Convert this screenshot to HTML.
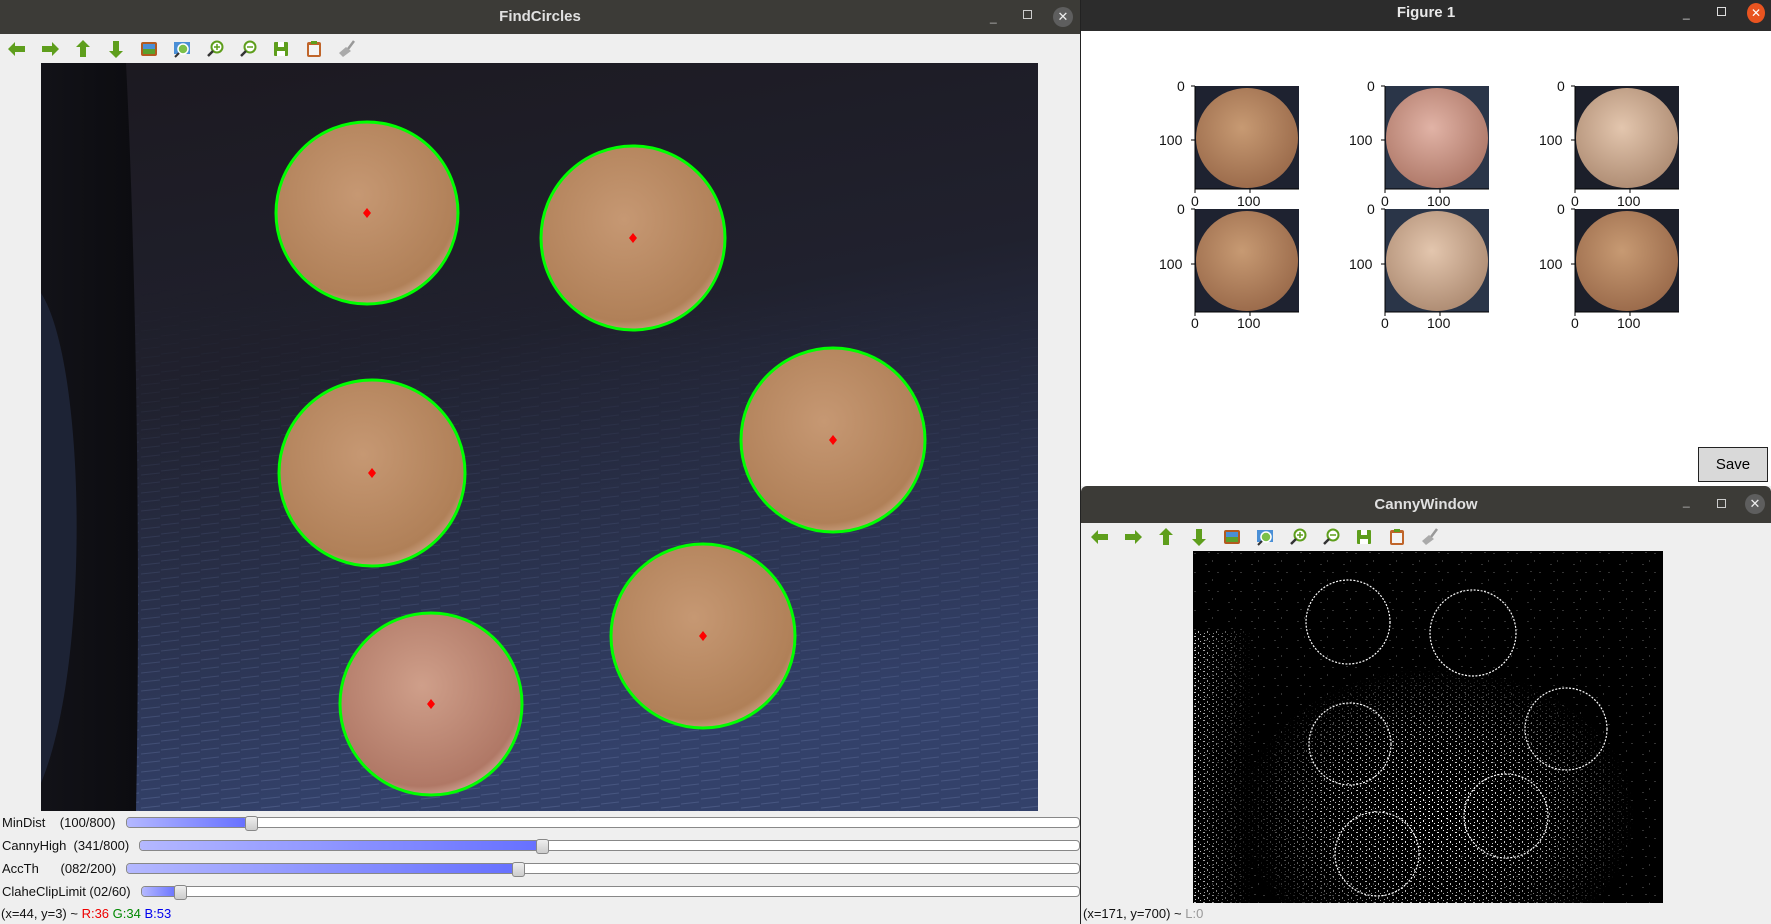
<!DOCTYPE html>
<html><head><meta charset="utf-8"><style>
*{margin:0;padding:0;box-sizing:border-box}
body{width:1771px;height:924px;overflow:hidden;background:#efefef;font-family:"Liberation Sans","DejaVu Sans",sans-serif;position:relative}
.abs{position:absolute}
.tb{background:#3c3b37;color:#e0e0e0;font-weight:bold;font-size:15px;text-align:center}
.lbl{position:absolute;font-size:13px;color:#111;white-space:pre}
.track{position:absolute;height:11px;border:1px solid #888;border-radius:4px;background:#fff;overflow:visible}
.fill{position:absolute;left:0;top:0;bottom:0;border-radius:3px;background:linear-gradient(90deg,#b4b8ff,#6670ff)}
.hdl{position:absolute;top:-2px;width:13px;height:15px;border:1px solid #888;border-radius:3px;background:linear-gradient(#eee,#ccc)}
</style></head><body>
<div class="abs tb" style="left:0;top:0;width:1080px;height:34px;line-height:34px">FindCircles</div>
<div class="abs" style="left:990px;top:10px;color:#bbb;font-size:12px">_</div>
<div class="abs" style="left:1023px;top:10px;width:9px;height:9px;border:1px solid #ccc"></div>
<div class="abs" style="left:1053px;top:7px;width:20px;height:20px;border-radius:50%;background:#5e5e5e;color:#eee;font-size:13px;text-align:center;line-height:20px">✕</div>
<div class="abs" style="left:1080px;top:0;width:1px;height:924px;background:#222"></div>

<svg class="abs" style="left:0;top:34px" width="380" height="30">
<g id="icons">
<g transform="translate(17,15)"><path d="M-9 0 L-2 -7 L-2 -3 L8 -3 L8 3 L-2 3 L-2 7Z" fill="#5e9e1c"/></g>
<g transform="translate(50,15)"><path d="M9 0 L2 -7 L2 -3 L-8 -3 L-8 3 L2 3 L2 7Z" fill="#5e9e1c"/></g>
<g transform="translate(83,15)"><path d="M0 -9 L7 -2 L3 -2 L3 8 L-3 8 L-3 -2 L-7 -2Z" fill="#5e9e1c"/></g>
<g transform="translate(116,15)"><path d="M0 9 L7 2 L3 2 L3 -8 L-3 -8 L-3 2 L-7 2Z" fill="#5e9e1c"/></g>
<g transform="translate(149,15)"><rect x="-8" y="-7" width="16" height="14" rx="2" fill="#b35a1f"/><rect x="-6" y="-5" width="12" height="5" fill="#4a8fd6"/><rect x="-6" y="0" width="12" height="5" fill="#5aa02c"/></g>
<g transform="translate(182,15)"><rect x="-8" y="-7" width="16" height="12" fill="#4a8fd6"/><circle cx="1" cy="0" r="5" fill="#7bc04a" stroke="#fff" stroke-width="1.5"/><path d="M-3 4 L-7 8" stroke="#333" stroke-width="2"/></g>
<g transform="translate(215,15)"><circle cx="2" cy="-2" r="5.5" fill="#fff" stroke="#5e9e1c" stroke-width="2"/><path d="M-2 2 L-7 7" stroke="#333" stroke-width="2.5"/><path d="M2 -5 V1 M-1 -2 H5" stroke="#5e9e1c" stroke-width="1.5"/></g>
<g transform="translate(248,15)"><circle cx="2" cy="-2" r="5.5" fill="#fff" stroke="#5e9e1c" stroke-width="2"/><path d="M-2 2 L-7 7" stroke="#333" stroke-width="2.5"/><path d="M-1 -2 H5" stroke="#5e9e1c" stroke-width="1.5"/></g>
<g transform="translate(281,15)"><rect x="-7" y="-7" width="14" height="14" rx="1" fill="#5e9e1c"/><rect x="-3" y="-7" width="6" height="5" fill="#fff"/><rect x="-4" y="2" width="8" height="5" fill="#fff"/></g>
<g transform="translate(314,15)"><rect x="-7" y="-7" width="14" height="15" rx="2" fill="#c0652a"/><rect x="-5" y="-4" width="10" height="10" fill="#f4f4f4"/><rect x="-3" y="-8" width="6" height="3" fill="#5e9e1c"/></g>
<g transform="translate(347,15)"><path d="M7 -8 L1 0" stroke="#999" stroke-width="2.5"/><path d="M-1 -2 L4 2 L-4 8 L-8 4Z" fill="#aaa"/></g>
</g>
</svg>

<svg class="abs" style="left:41px;top:63px" width="997" height="748">
<defs>
<linearGradient id="bg" x1="0" y1="0" x2="0.25" y2="1"><stop offset="0" stop-color="#1c1920"/><stop offset="0.45" stop-color="#20212e"/><stop offset="1" stop-color="#33416a"/></linearGradient>
<radialGradient id="cu" cx="0.45" cy="0.4" r="0.65"><stop offset="0" stop-color="#c69873"/><stop offset="0.85" stop-color="#b08058"/><stop offset="0.95" stop-color="#caa080"/><stop offset="1" stop-color="#d8b8a0"/></radialGradient>
<radialGradient id="cu2" cx="0.45" cy="0.4" r="0.65"><stop offset="0" stop-color="#cf9f8a"/><stop offset="0.85" stop-color="#b07866"/><stop offset="1" stop-color="#dcb8a8"/></radialGradient>
<linearGradient id="lf" x1="0" y1="0" x2="1" y2="0"><stop offset="0" stop-color="#121218"/><stop offset="1" stop-color="#0c0c10"/></linearGradient>
<pattern id="tex" width="40" height="9" patternUnits="userSpaceOnUse"><path d="M0 3 L18 1 M20 7 L39 5" stroke="#6f7fae" stroke-width="1" opacity="0.35"/></pattern>
<linearGradient id="tm" x1="0" y1="0" x2="0" y2="1"><stop offset="0.3" stop-color="#000"/><stop offset="1" stop-color="#fff"/></linearGradient>
<mask id="tmk"><rect width="997" height="748" fill="url(#tm)"/></mask>
</defs>
<rect width="997" height="748" fill="url(#bg)"/>
<rect width="997" height="748" fill="url(#tex)" mask="url(#tmk)"/>
<path d="M0 0 H85 C95 200 100 500 95 748 H0Z" fill="url(#lf)"/>
<path d="M0 230 C45 300 50 600 0 720Z" fill="#1d2335"/>
<g stroke="#00ff00" stroke-width="3">
<circle cx="326" cy="150" r="91" fill="url(#cu)"/>
<circle cx="592" cy="175" r="92" fill="url(#cu)"/>
<circle cx="331" cy="410" r="93" fill="url(#cu)"/>
<circle cx="792" cy="377" r="92" fill="url(#cu)"/>
<circle cx="390" cy="641" r="91" fill="url(#cu2)"/>
<circle cx="662" cy="573" r="92" fill="url(#cu)"/>
</g>
<g fill="#ff0000">
<path d="M326 145 l4 5 -4 5 -4 -5Z"/><path d="M592 170 l4 5 -4 5 -4 -5Z"/><path d="M331 405 l4 5 -4 5 -4 -5Z"/>
<path d="M792 372 l4 5 -4 5 -4 -5Z"/><path d="M390 636 l4 5 -4 5 -4 -5Z"/><path d="M662 568 l4 5 -4 5 -4 -5Z"/>
</g>
</svg>

<div class="lbl" style="left:2px;top:815px">MinDist    (100/800)</div>
<div class="track" style="left:126px;top:817px;width:954px"><div class="fill" style="width:120px"></div><div class="hdl" style="left:118px"></div></div>
<div class="lbl" style="left:2px;top:838px">CannyHigh  (341/800)</div>
<div class="track" style="left:139px;top:840px;width:941px"><div class="fill" style="width:400px"></div><div class="hdl" style="left:396px"></div></div>
<div class="lbl" style="left:2px;top:861px">AccTh      (082/200)</div>
<div class="track" style="left:126px;top:863px;width:954px"><div class="fill" style="width:390px"></div><div class="hdl" style="left:385px"></div></div>
<div class="lbl" style="left:2px;top:884px">ClaheClipLimit (02/60)</div>
<div class="track" style="left:141px;top:886px;width:939px"><div class="fill" style="width:36px"></div><div class="hdl" style="left:32px"></div></div>
<div class="lbl" style="left:1px;top:906px">(x=44, y=3) ~ <span style="color:#e00">R:36</span> <span style="color:#080">G:34</span> <span style="color:#00e">B:53</span></div>

<div class="abs" style="left:1081px;top:0;width:690px;height:31px;background:#2c2c2c;color:#e8e8e8;font-weight:bold;font-size:15px;text-align:center;line-height:26px">Figure 1</div>
<div class="abs" style="left:1683px;top:6px;color:#ddd;font-size:12px">_</div>
<div class="abs" style="left:1717px;top:7px;width:9px;height:9px;border:1px solid #ddd"></div>
<div class="abs" style="left:1747px;top:3px;width:18px;height:20px;border-radius:50%;background:#e95420;color:#fff;font-size:12px;text-align:center;line-height:20px">✕</div>
<div class="abs" style="left:1081px;top:31px;width:690px;height:455px;background:#fff"></div>
<svg class="abs" style="left:1081px;top:31px" width="690" height="310">
<defs>
<radialGradient id="t1" cx="0.45" cy="0.4" r="0.6"><stop offset="0" stop-color="#c79a73"/><stop offset="1" stop-color="#9c6c4c"/></radialGradient>
<radialGradient id="t2" cx="0.45" cy="0.4" r="0.6"><stop offset="0" stop-color="#e1b3a6"/><stop offset="1" stop-color="#b07a6a"/></radialGradient>
<radialGradient id="t3" cx="0.45" cy="0.4" r="0.6"><stop offset="0" stop-color="#e3c6ae"/><stop offset="1" stop-color="#b08e75"/></radialGradient>
</defs>
<g font-family="Liberation Sans, sans-serif" font-size="14" fill="#111">
<g transform="translate(114,55)"><rect width="104" height="103" fill="#1e2230"/><ellipse cx="52" cy="52" rx="51" ry="50" fill="url(#t1)"/></g>
<g transform="translate(304,55)"><rect width="104" height="103" fill="#2a3548"/><ellipse cx="52" cy="52" rx="51" ry="50" fill="url(#t2)"/></g>
<g transform="translate(494,55)"><rect width="104" height="103" fill="#1c1f2a"/><ellipse cx="52" cy="52" rx="51" ry="50" fill="url(#t3)"/></g>
<g transform="translate(114,178)"><rect width="104" height="103" fill="#1e2230"/><ellipse cx="52" cy="52" rx="51" ry="50" fill="url(#t1)"/></g>
<g transform="translate(304,178)"><rect width="104" height="103" fill="#2a3548"/><ellipse cx="52" cy="52" rx="51" ry="50" fill="url(#t3)"/></g>
<g transform="translate(494,178)"><rect width="104" height="103" fill="#1c1f2a"/><ellipse cx="52" cy="52" rx="51" ry="50" fill="url(#t1)"/></g>
<g stroke="#000" stroke-width="1">
<path d="M114 55 v103 M304 55 v103 M494 55 v103 M114 178 v103 M304 178 v103 M494 178 v103"/>
<path d="M114 158 h104 M304 158 h104 M494 158 h104 M114 281 h104 M304 281 h104 M494 281 h104"/>
<path d="M110 55 h4 M110 109 h4 M300 55 h4 M300 109 h4 M490 55 h4 M490 109 h4 M110 178 h4 M110 233 h4 M300 178 h4 M300 233 h4 M490 178 h4 M490 233 h4"/>
<path d="M114 158 v4 M169 158 v4 M304 158 v4 M359 158 v4 M494 158 v4 M549 158 v4 M114 281 v4 M169 281 v4 M304 281 v4 M359 281 v4 M494 281 v4 M549 281 v4"/>
</g>
<text x="96" y="60">0</text><text x="78" y="114">100</text>
<text x="286" y="60">0</text><text x="268" y="114">100</text>
<text x="476" y="60">0</text><text x="458" y="114">100</text>
<text x="96" y="183">0</text><text x="78" y="238">100</text>
<text x="286" y="183">0</text><text x="268" y="238">100</text>
<text x="476" y="183">0</text><text x="458" y="238">100</text>
<text x="110" y="175">0</text><text x="156" y="175">100</text>
<text x="300" y="175">0</text><text x="346" y="175">100</text>
<text x="490" y="175">0</text><text x="536" y="175">100</text>
<text x="110" y="297">0</text><text x="156" y="297">100</text>
<text x="300" y="297">0</text><text x="346" y="297">100</text>
<text x="490" y="297">0</text><text x="536" y="297">100</text>
</g>
</svg>
<div class="abs" style="left:1698px;top:447px;width:70px;height:35px;border:1px solid #222;background:#d9d9d9;font-size:15px;text-align:center;line-height:33px">Save</div>

<div class="abs tb" style="left:1081px;top:486px;width:690px;height:37px;line-height:37px;border-radius:6px 6px 0 0">CannyWindow</div>
<div class="abs" style="left:1683px;top:494px;color:#bbb;font-size:12px">_</div>
<div class="abs" style="left:1717px;top:499px;width:9px;height:9px;border:1px solid #ccc"></div>
<div class="abs" style="left:1745px;top:494px;width:20px;height:20px;border-radius:50%;background:#5e5e5e;color:#eee;font-size:13px;text-align:center;line-height:20px">✕</div>
<svg class="abs" style="left:1083px;top:522px" width="380" height="30"><use href="#icons"/></svg>
<svg class="abs" style="left:1193px;top:551px" width="470" height="352">
<defs>
<pattern id="spk" width="23" height="19" patternUnits="userSpaceOnUse">
<rect x="1" y="2" width="2" height="1" fill="#fff"/><rect x="15" y="1" width="2" height="1" fill="#fff"/><rect x="12" y="13" width="2" height="1" fill="#fff"/><rect x="19" y="9" width="1" height="2" fill="#fff"/>
</pattern>
<pattern id="spk2" width="9" height="7" patternUnits="userSpaceOnUse">
<rect x="1" y="1" width="2" height="1" fill="#fff"/><rect x="5" y="3" width="1" height="2" fill="#fff"/><rect x="2" y="5" width="1" height="1" fill="#fff"/><rect x="7" y="6" width="1" height="1" fill="#fff"/>
</pattern>
<radialGradient id="mg" cx="0.52" cy="0.75" r="0.42"><stop offset="0" stop-color="#fff"/><stop offset="0.6" stop-color="#aaa"/><stop offset="1" stop-color="#000"/></radialGradient>
<mask id="mk"><rect width="470" height="352" fill="url(#mg)"/></mask>
<linearGradient id="lm" x1="0" y1="0" x2="1" y2="0"><stop offset="0" stop-color="#fff"/><stop offset="1" stop-color="#000"/></linearGradient>
<mask id="lmk"><rect width="60" height="352" fill="url(#lm)"/></mask>
</defs>
<rect width="470" height="352" fill="#000"/>
<rect width="470" height="352" fill="url(#spk)" opacity="0.2"/>
<rect width="470" height="352" fill="url(#spk2)" mask="url(#mk)"/>
<rect x="0" y="80" width="60" height="272" fill="url(#spk2)" mask="url(#lmk)" opacity="0.8"/>
<g fill="none" stroke="#fff" stroke-width="1.2" stroke-dasharray="2 1.5">
<circle cx="155" cy="71" r="42"/><circle cx="280" cy="82" r="43"/><circle cx="157" cy="193" r="41"/>
<circle cx="373" cy="178" r="41"/><circle cx="184" cy="303" r="42"/><circle cx="313" cy="265" r="42"/>
</g>
</svg>
<div class="lbl" style="left:1083px;top:906px">(x=171, y=700) ~ <span style="color:#999">L:0</span></div>
</body></html>
